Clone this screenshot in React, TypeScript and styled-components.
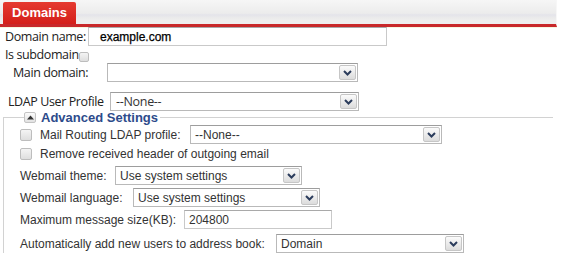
import React from "react";
import styled, { createGlobalStyle } from "styled-components";

const Global = createGlobalStyle`
  html, body { margin: 0; padding: 0; background: #fff; }
  body { font-family: "Liberation Sans", Arial, sans-serif; color: #333; }
  * { box-sizing: border-box; }
`;

const Page = styled.div`
  width: 576px;
  height: 258px;
  overflow: hidden;
`;

const TabBar = styled.div`
  width: 557px;
  height: 27px;
  padding: 2px 0 0 3px;
  background: linear-gradient(#f6f6f6 0%, #ececec 55%, #e4e4ea 62%, #ebebeb 75%, #eeeeee 85%);
  border-bottom: 3px solid #c8282a;
  border-right: 1px solid #f7f7f7;
  display: flex;
  align-items: flex-end;
  box-shadow: 0 1px 0 #f6f6e0;
`;

const Tab = styled.div`
  width: 73px;
  height: 22px;
  border-radius: 2px 2px 0 0;
  background: linear-gradient(#e53a30, #d41f1a);
  color: #fff;
  font: bold 13px "Liberation Sans", Arial, sans-serif;
  display: flex;
  align-items: center;
  justify-content: center;
  padding-bottom: 1px;
`;

const TopRow = styled.div<{ $mt: number; $pl: number; $h: number }>`
  display: flex;
  align-items: center;
  margin-top: ${(p) => p.$mt}px;
  padding-left: ${(p) => p.$pl}px;
  height: ${(p) => p.$h}px;
`;

const TopLabel = styled.span<{ $w?: number }>`
  font: 12.5px "Open Sans", "Noto Sans", sans-serif;
  letter-spacing: -0.4px;
  color: #222;
  ${(p) => (p.$w ? `width: ${p.$w}px; flex: none;` : "")}
  white-space: nowrap;
`;

const TextInput = styled.div<{ $w: number; $strong?: boolean; $pl?: number }>`
  width: ${(p) => p.$w}px;
  height: 19px;
  border: 1px solid #c9c9c9;
  border-top-color: #a9a9a9;
  background: #fff;
  display: flex;
  align-items: center;
  padding-left: ${(p) => p.$pl ?? 4}px;
  font: 12px "Liberation Sans", Arial, sans-serif;
  ${(p) => (p.$strong ? "color: #000; -webkit-text-stroke: 0.25px #000;" : "color: #333;")}
`;

const SelectBox = styled.div<{ $w: number; $big?: boolean }>`
  width: ${(p) => p.$w}px;
  height: 19px;
  flex: none;
  border: 1px solid #b9b9b9;
  border-top-color: #9d9d9d;
  background: #fff;
  display: flex;
  align-items: stretch;
  font: ${(p) => (p.$big ? "12.5px \"Open Sans\", sans-serif" : "12px \"Liberation Sans\", Arial, sans-serif")};
  ${(p) => (p.$big ? "letter-spacing: -0.3px;" : "")}
  color: #333;
`;

const SelectValue = styled.span<{ $pl?: number }>`
  flex: 1;
  display: flex;
  align-items: center;
  padding-left: ${(p) => p.$pl ?? 4}px;
  white-space: nowrap;
  overflow: hidden;
`;

const ArrowBtn = styled.span`
  width: 17px;
  flex: none;
  margin: 1px;
  border: 1px solid #c6c6c6;
  border-radius: 2px;
  background: linear-gradient(#fbfbfb, #dcdcdc);
  display: flex;
  align-items: center;
  justify-content: center;
`;

const Chevron = () => (
  <svg width="9" height="6" viewBox="0 0 9 6">
    <path d="M1 1 L4.5 4.5 L8 1" fill="none" stroke="#2b3c5c" strokeWidth="2" />
  </svg>
);

const Select: React.FC<{ w: number; value?: string; big?: boolean; pl?: number }> = ({ w, value, big, pl }) => (
  <SelectBox $w={w} $big={big}>
    <SelectValue $pl={pl}>{value}</SelectValue>
    <ArrowBtn>
      <Chevron />
    </ArrowBtn>
  </SelectBox>
);

const SmallCheck = styled.span<{ $size: number; $mt?: number }>`
  display: inline-block;
  flex: none;
  width: ${(p) => p.$size}px;
  height: ${(p) => p.$size}px;
  margin-top: ${(p) => p.$mt ?? 0}px;
  border: 1px solid #bdbdbd;
  border-radius: 2px;
  background: linear-gradient(#f4f4f4, #dedede);
`;

const Fieldset = styled.fieldset`
  margin: -1px 0 0 3px;
  width: 550px;
  padding: 0 0 0 16px;
  border: 1px solid #d2d2d2;
  border-right: none;
  border-bottom: none;
  min-width: 0;
`;

const Legend = styled.legend`
  margin-left: 4px;
  padding: 0 2px 0 0;
  display: flex;
  align-items: center;
  gap: 5px;
  font: bold 13px "Liberation Sans", Arial, sans-serif;
  color: #2d4b8b;
  height: 15px;
`;

const ToggleBtn = styled.span`
  width: 12px;
  height: 11px;
  border: 1px solid #c4c4c4;
  border-radius: 2px;
  background: linear-gradient(#fbfbfb, #e2e2e2);
  display: flex;
  align-items: center;
  justify-content: center;
`;

const Row = styled.div<{ $mt: number; $h?: number }>`
  display: flex;
  align-items: center;
  margin-top: ${(p) => p.$mt}px;
  height: ${(p) => p.$h ?? 19}px;
`;

const Label = styled.span<{ $w?: number }>`
  font: 12px "Liberation Sans", Arial, sans-serif;
  color: #333;
  white-space: nowrap;
  ${(p) => (p.$w ? `width: ${p.$w}px; flex: none;` : "")}
`;

const CheckLabel = styled(Label)`
  margin-left: 8px;
`;

export default function App() {
  return (
    <Page>
      <Global />
      <TabBar>
        <Tab>Domains</Tab>
      </TabBar>
      <TopRow $mt={0} $pl={5} $h={19}>
        <TopLabel $w={83}>Domain name:</TopLabel>
        <TextInput $w={299} $strong $pl={11}>example.com</TextInput>
      </TopRow>
      <TopRow $mt={0} $pl={5} $h={17}>
        <TopLabel>Is subdomain</TopLabel>
        <SmallCheck $size={10} $mt={5} />
      </TopRow>
      <TopRow $mt={0} $pl={13} $h={19}>
        <TopLabel $w={94}>Main domain:</TopLabel>
        <Select w={251} />
      </TopRow>
      <TopRow $mt={10} $pl={8} $h={19}>
        <TopLabel $w={102}>LDAP User Profile</TopLabel>
        <Select w={249} value="--None--" big pl={5} />
      </TopRow>
      <Fieldset>
        <Legend>
          <ToggleBtn>
            <svg width="7" height="5" viewBox="0 0 7 5">
              <path d="M0 4.5 L3.5 0.5 L7 4.5 Z" fill="#333" />
            </svg>
          </ToggleBtn>
          Advanced Settings
        </Legend>
        <Row $mt={0}>
          <SmallCheck $size={12} />
          <CheckLabel $w={150}>Mail Routing LDAP profile:</CheckLabel>
          <Select w={252} value="--None--" />
        </Row>
        <Row $mt={2} $h={16}>
          <SmallCheck $size={12} />
          <CheckLabel>Remove received header of outgoing email</CheckLabel>
        </Row>
        <Row $mt={4}>
          <Label $w={95}>Webmail theme:</Label>
          <Select w={187} value="Use system settings" />
        </Row>
        <Row $mt={3}>
          <Label $w={113}>Webmail language:</Label>
          <Select w={187} value="Use system settings" />
        </Row>
        <Row $mt={3}>
          <Label $w={164}>Maximum message size(KB):</Label>
          <TextInput $w={148}>204800</TextInput>
        </Row>
        <Row $mt={5}>
          <Label $w={256}>Automatically add new users to address book:</Label>
          <Select w={188} value="Domain" />
        </Row>
      </Fieldset>
    </Page>
  );
}
